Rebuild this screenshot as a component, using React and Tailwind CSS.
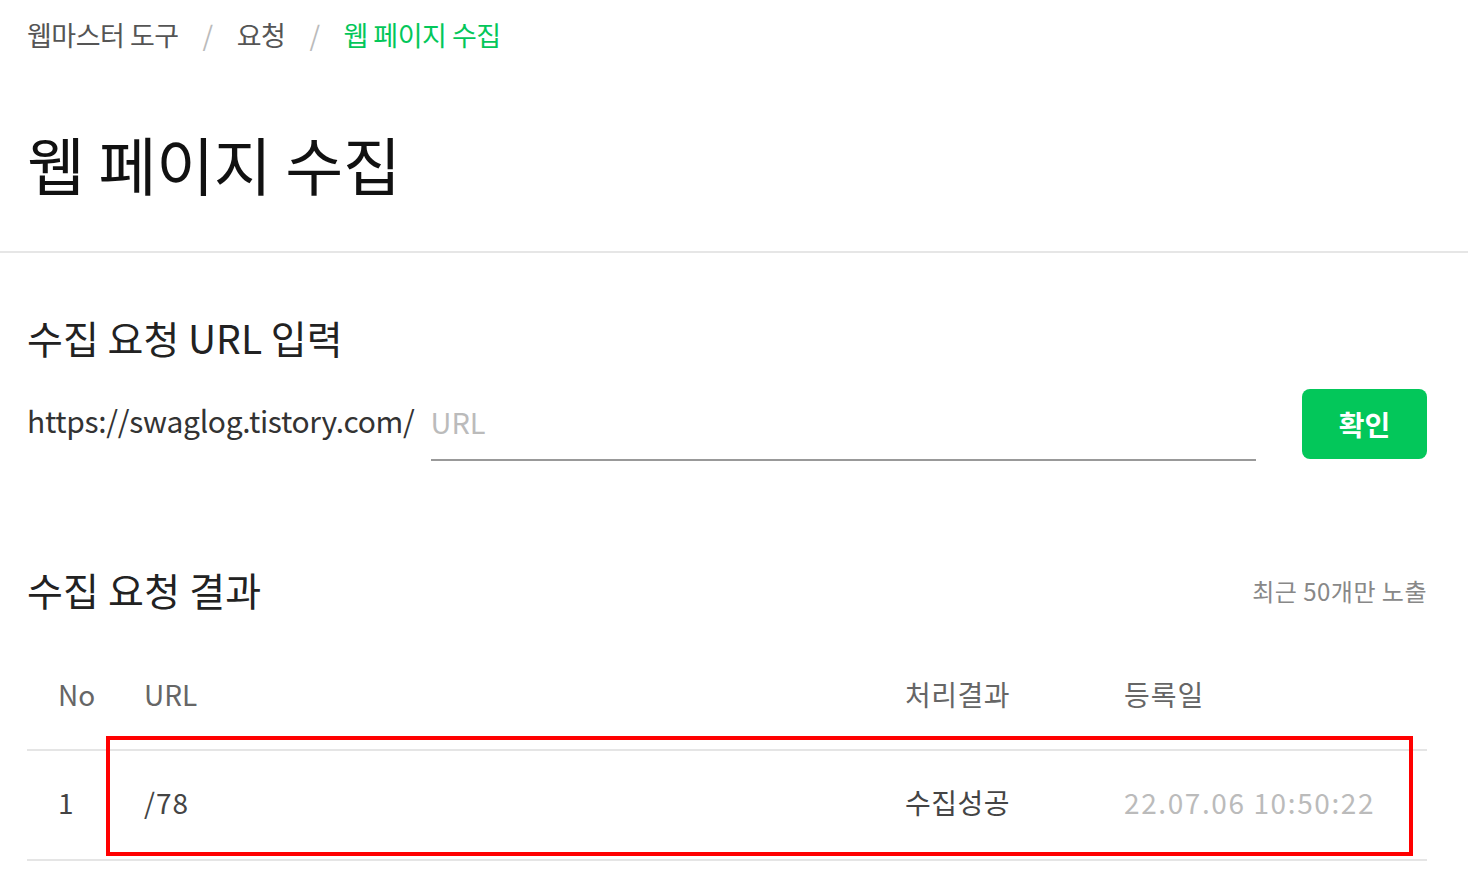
export default function App() {
  const font = { fontFamily: '"Noto Sans CJK KR", "Noto Sans", sans-serif' };
  return (
    <div className="w-[1468px] h-[883px] bg-white overflow-hidden" style={font}>
      {/* breadcrumb */}
      <div className="h-[70px] pl-[27px] flex items-center text-[27px] tracking-[-0.5px] text-[#555]">
        <span>웹마스터 도구</span>
        <span className="mx-[24px] text-[#bbb]">/</span>
        <span>요청</span>
        <span className="mx-[24px] text-[#bbb]">/</span>
        <span className="text-[#03c75a]">웹 페이지 수집</span>
      </div>
      {/* title */}
      <div className="h-[181px] pl-[27px] pt-[6px] flex items-center text-[63px] text-[#111] tracking-[-0.3px]">
        웹 페이지 수집
      </div>
      <div className="h-[2px] bg-[#e6e6e6]" />

      <div className="pl-[27px] pr-[41px]">
        {/* input section */}
        <div className="mt-[47px] h-[78px] pb-[4px] flex items-center text-[39px] text-[#222] tracking-[0px]">
          수집 요청 URL 입력
        </div>
        <div className="mt-[11px] h-[72px] flex items-start">
          <div className="h-[62px] flex items-center text-[30px] text-[#333] tracking-[-0.3px] whitespace-nowrap">
            https://swaglog.tistory.com/
          </div>
          <div className="ml-[16px] w-[825px] h-[72px] border-b-2 border-[#999] flex items-start">
            <input
              className="w-full h-[64px] outline-none text-[29px] text-[#333] placeholder:text-[#bbb] pl-0"
              placeholder="URL"
              style={font}
            />
          </div>
          <button
            className="ml-auto w-[125px] h-[70px] rounded-[8px] bg-[#03c75a] text-white text-[28px] font-bold flex items-center justify-center"
            style={font}
          >
            확인
          </button>
        </div>

        {/* results heading */}
        <div className="mt-[100px] h-[60px] pb-[3px] flex items-center justify-between">
          <div className="text-[39px] text-[#222] tracking-[0.2px]">수집 요청 결과</div>
          <div className="text-[24px] text-[#888] tracking-[0.5px] pt-[3px]">최근 50개만 노출</div>
        </div>

        {/* table */}
        <div className="relative mt-[46px]">
          <div className="h-[84px] pb-[28px] flex items-center border-b-2 border-[#e5e5e5] text-[28px] text-[#666]">
            <div className="w-[117px] pl-[31px]">No</div>
            <div className="w-[761px]">URL</div>
            <div className="w-[219px] tracking-[0.5px]">처리결과</div>
            <div className="flex-1 tracking-[1px]">등록일</div>
          </div>
          <div className="h-[110px] pb-[7px] flex items-center border-b-2 border-[#e5e5e5] text-[28px] text-[#444]">
            <div className="w-[117px] pl-[31px]">1</div>
            <div className="w-[761px] tracking-[1px]">/78</div>
            <div className="w-[219px] tracking-[0.5px]">수집성공</div>
            <div className="flex-1 text-[#bbb] tracking-[1.6px]">22.07.06 10:50:22</div>
          </div>
          <div className="absolute left-[79px] top-[69px] w-[1307px] h-[120px] border-4 border-[#ff0000] pointer-events-none" />
        </div>
      </div>
    </div>
  );
}
